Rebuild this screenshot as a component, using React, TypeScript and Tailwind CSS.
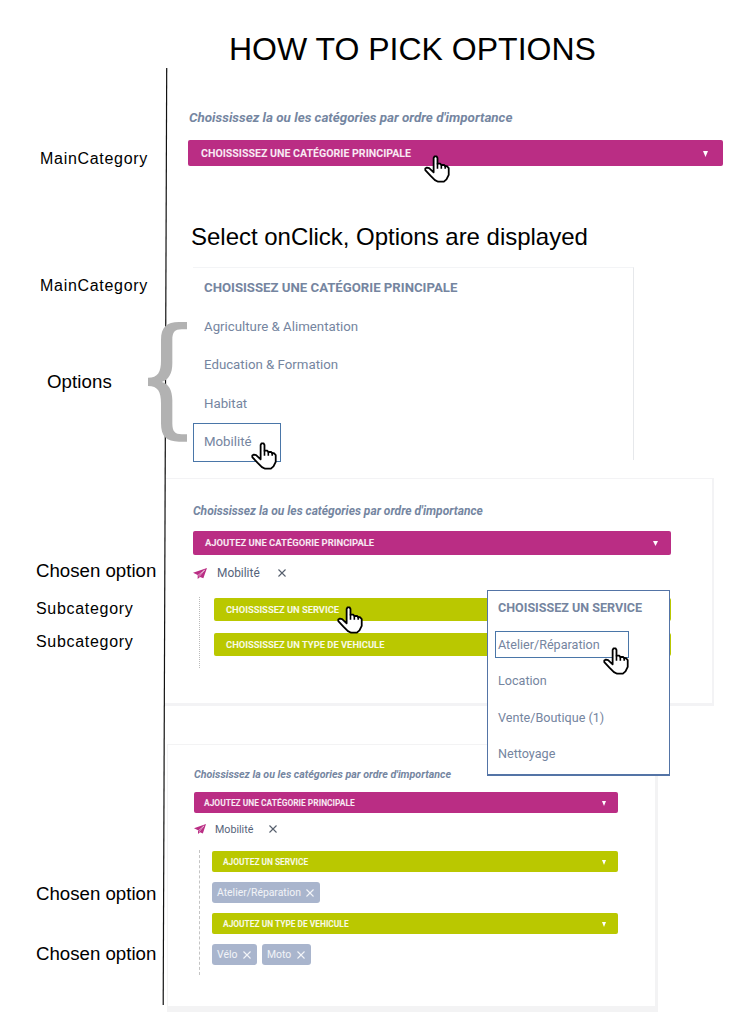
import React from 'react';

function Hand({ className }: { className: string }) {
  return (
    <svg viewBox="0 0 81 87" className={`absolute z-20 h-[28px] w-[26px] ${className}`}>
      <path
        d="M30 54V9L33 4H39L42 9V27H51L54 31H63L66 35H72L77 41V62L70 76L62 83H44L34 78L20 64L4 47V42L9 39L16 41L30 54Z"
        fill="#fff"
        stroke="#000"
        strokeWidth="5.6"
        strokeLinejoin="round"
      />
      <path d="M42 26V43M54 28V43M66 32V43" fill="none" stroke="#000" strokeWidth="5" />
    </svg>
  );
}

function Plane({ className }: { className: string }) {
  return (
    <svg viewBox="0 0 42 33" preserveAspectRatio="none" className={className}>
      <path d="M0 14L42 0L31 31L21 27L14 33V21Z" fill="#ba2d84" />
      <path d="M15 22L35 6L18 26" fill="none" stroke="#fff" strokeWidth="1.6" />
    </svg>
  );
}

function Cross({ className }: { className: string }) {
  return (
    <svg viewBox="0 0 10 10" className={`shrink-0 ${className}`} fill="none" stroke="currentColor" strokeWidth="1.4">
      <path d="M0.6 0.6L9.4 9.4M9.4 0.6L0.6 9.4" />
    </svg>
  );
}

function Bar({ text, className, arrow }: { text: string; className: string; arrow: string }) {
  return (
    <div className={`flex items-center justify-between rounded-[2px] pt-px font-bold whitespace-nowrap text-white/90 ${className}`}>
      <span>{text}</span>
      <svg viewBox="0 0 6 6" preserveAspectRatio="none" className={arrow}>
        <path d="M0 0H6L3 6Z" fill="#fff" />
      </svg>
    </div>
  );
}

function Label({ text, className }: { text: string; className: string }) {
  return <div className={`h-6 leading-6 whitespace-nowrap ${className}`}>{text}</div>;
}

function Chip({ text, className }: { text: string; className: string }) {
  return (
    <span className={`flex h-[21px] items-center justify-between rounded-[3px] bg-[#a9b5cd] pr-[6px] pl-[5px] text-[10.4px] text-white/85 ${className}`}>
      <span className="pt-px">{text}</span>
      <Cross className="h-2 w-2" />
    </span>
  );
}

export default function App() {
  return (
    <main className="relative flex h-[1020px] w-[753px] overflow-hidden bg-white font-['Liberation_Sans',sans-serif] text-black">
      <aside className="w-[163px] shrink-0 pt-[147px]">
        <Label text="MainCategory" className="pl-[40px] text-[16px] tracking-[0.7px]" />
        <Label text="MainCategory" className="mt-[103px] pl-[40px] text-[16px] tracking-[0.7px]" />
        <Label text="Options" className="mt-[72px] pl-[47px] text-[18.67px] tracking-[0.1px]" />
        <Label text="Chosen option" className="mt-[165px] pl-[36px] text-[18.67px]" />
        <Label text="Subcategory" className="mt-[14px] pl-[36px] text-[16px] tracking-[0.7px]" />
        <Label text="Subcategory" className="mt-[9px] pl-[36px] text-[16px] tracking-[0.7px]" />
        <Label text="Chosen option" className="mt-[228px] pl-[36px] text-[18.67px]" />
        <Label text="Chosen option" className="mt-[36px] pl-[36px] text-[18.67px]" />
      </aside>

      <div className="w-[590px] shrink-0 pt-[29px]">
        <h1 className="h-10 pl-[66px] text-[32px] leading-10 whitespace-nowrap">HOW TO PICK OPTIONS</h1>

        <section className="relative mt-[39px] ml-[25px] w-[535px] font-[Roboto,sans-serif]">
          <p className="h-5 pl-px text-[13.4px] leading-5 font-bold whitespace-nowrap text-[#7586a1] italic">
            Choississez la ou les catégories par ordre d'importance
          </p>
          <Bar
            text="CHOISSISSEZ UNE CATÉGORIE PRINCIPALE"
            className="mt-[12px] h-[26px] bg-[#ba2d84] pr-[15px] pl-[13px] text-[10.6px]"
            arrow="h-[6px] w-[5px]"
          />
          <Hand className="top-[47px] left-[236px]" />
        </section>

        <h2 className="mt-[55px] h-8 pl-[28px] text-[24px] leading-8 tracking-[-0.02px] whitespace-nowrap">
          Select onClick, Options are displayed
        </h2>

        <section className="relative mt-[14px] ml-[30px] h-[193px] w-[441px] border-t border-r border-t-[#f3f4f6] border-r-[#e6e8eb] font-[Roboto,sans-serif] text-[13.25px] leading-[38.5px] whitespace-nowrap text-[#7585a0]">
          <div className="h-[38.5px] pt-px pl-[11px] text-[13.2px] leading-[38px] font-bold">CHOISISSEZ UNE CATÉGORIE PRINCIPALE</div>
          <div className="h-[38.5px] pt-px pl-[11px] leading-[38px]">Agriculture &amp; Alimentation</div>
          <div className="h-[38.5px] pt-px pl-[11px] leading-[38px]">Education &amp; Formation</div>
          <div className="h-[38.5px] pt-px pl-[11px] leading-[38px]">Habitat</div>
          <div className="mt-px h-[39px] w-[88px] border border-[#4a76a8] pl-[10px] leading-[36px]">Mobilité</div>
          <Hand className="top-[174px] left-[58px]" />
        </section>

        <section className="relative mt-[18px] ml-[2px] h-[228px] w-[549px] border-t border-r-2 border-b-[3px] border-[#f3f3f5] pt-[23px] pl-[28px] font-[Roboto,sans-serif]">
          <p className="h-[18px] text-[12px] leading-[18px] font-bold whitespace-nowrap text-[#7586a1] italic">
            Choississez la ou les catégories par ordre d'importance
          </p>
          <Bar
            text="AJOUTEZ UNE CATÉGORIE PRINCIPALE"
            className="mt-[11px] h-[24px] w-[478px] bg-[#ba2d84] pr-[13px] pl-[12px] text-[9.45px]"
            arrow="h-[5px] w-[5px]"
          />
          <div className="flex h-[36px] items-center text-[11.9px] text-[#56637a]">
            <Plane className="h-[11px] w-[14px]" />
            <span className="ml-[10px] w-[61px] pt-px">Mobilité</span>
            <Cross className="h-[8px] w-[8px] text-[#57606e]" />
          </div>
          <div className="mt-[6px] ml-[6px] flex h-[71px] flex-col gap-3 border-l border-dotted border-[#bbb] pt-px pl-[14px]">
            <Bar
              text="CHOISSISSEZ UN SERVICE"
              className="h-[23px] w-[457px] bg-[#bac800] pr-[13px] pl-[12px] text-[9.35px]"
              arrow="h-[5px] w-[5px]"
            />
            <Bar
              text="CHOISSISSEZ UN TYPE DE VEHICULE"
              className="h-[23px] w-[457px] bg-[#bac800] pr-[13px] pl-[12px] text-[9.4px]"
              arrow="h-[5px] w-[5px]"
            />
          </div>
          <Hand className="top-[127px] left-[172px]" />
          <div className="absolute top-[111px] left-[322px] z-10 h-[186px] w-[183px] border border-b-2 border-[#5474a6] bg-white text-[12.6px] leading-[36.6px] whitespace-nowrap text-[#7585a0]">
            <div className="h-[34px] pl-[10px] text-[12.55px] leading-[34px] font-bold">CHOISISSEZ UN SERVICE</div>
            <div className="mt-[6px] ml-[7px] h-[27px] w-[134px] border border-[#4a76a8] pl-[2px] leading-[25px]">
              Atelier/Réparation
            </div>
            <div className="mt-[5px] pl-[10px]">Location</div>
            <div className="pl-[10px]">Vente/Boutique (1)</div>
            <div className="pl-[10px]">Nettoyage</div>
          </div>
          <Hand className="top-[168px] left-[438px]" />
        </section>

        <section className="mt-[38px] ml-[4px] h-[268px] w-[491px] border-t border-r-[3px] border-b-[6px] border-l border-[#f3f3f4] pt-[22px] pl-[26px] font-[Roboto,sans-serif]">
          <p className="h-4 text-[10.65px] leading-4 font-bold whitespace-nowrap text-[#7586a1] italic">
            Choississez la ou les catégories par ordre d'importance
          </p>
          <Bar
            text="AJOUTEZ UNE CATÉGORIE PRINCIPALE"
            className="mt-[9px] h-[21px] w-[424px] bg-[#ba2d84] pr-[12px] pl-[10px] text-[8.42px]"
            arrow="h-[5px] w-[4px]"
          />
          <div className="flex h-[32px] items-center text-[10.7px] text-[#56637a]">
            <Plane className="h-[10px] w-[12px]" />
            <span className="ml-[9px] w-[54px] pt-[2px]">Mobilité</span>
            <Cross className="h-[8px] w-[8px] text-[#57606e]" />
          </div>
          <div className="mt-[5px] ml-[5px] flex h-[125px] flex-col border-l border-dashed border-[#c4c4c4] pt-px pl-[12px]">
            <Bar
              text="AJOUTEZ UN SERVICE"
              className="h-[21px] w-[406px] shrink-0 bg-[#bac800] pr-[12px] pl-[11px] text-[8.35px]"
              arrow="h-[5px] w-[4px]"
            />
            <div className="mt-[10px] flex">
              <Chip text="Atelier/Réparation" className="w-[108px]" />
            </div>
            <Bar
              text="AJOUTEZ UN TYPE DE VEHICULE"
              className="mt-[10px] h-[21px] w-[406px] shrink-0 bg-[#bac800] pr-[12px] pl-[11px] text-[8.4px]"
              arrow="h-[5px] w-[4px]"
            />
            <div className="mt-[10px] flex gap-[5px]">
              <Chip text="Vélo" className="w-[45px]" />
              <Chip text="Moto" className="w-[49px]" />
            </div>
          </div>
        </section>
      </div>

      <svg viewBox="0 0 6 938" className="absolute top-[68px] left-[162px] h-[938px] w-[6px]">
        <path d="M4.7 0L1.2 937" stroke="#111" strokeWidth="1.2" />
      </svg>
      <svg viewBox="54 336 117 360" className="absolute top-[322px] left-[148px] h-[120px] w-[39px]">
        <path
          d="M171 336H147C110 336 93 352 93 390V452C93 485 84 503 54 503V528C84 528 93 545 93 580V640C93 680 110 695 147 695H171V673H155C135 673 127 665 127 640V570C127 540 115 521 95 516C115 510 127 492 127 460V390C127 366 135 358 155 358H171Z"
          fill="#b2b2b2"
        />
      </svg>
    </main>
  );
}
